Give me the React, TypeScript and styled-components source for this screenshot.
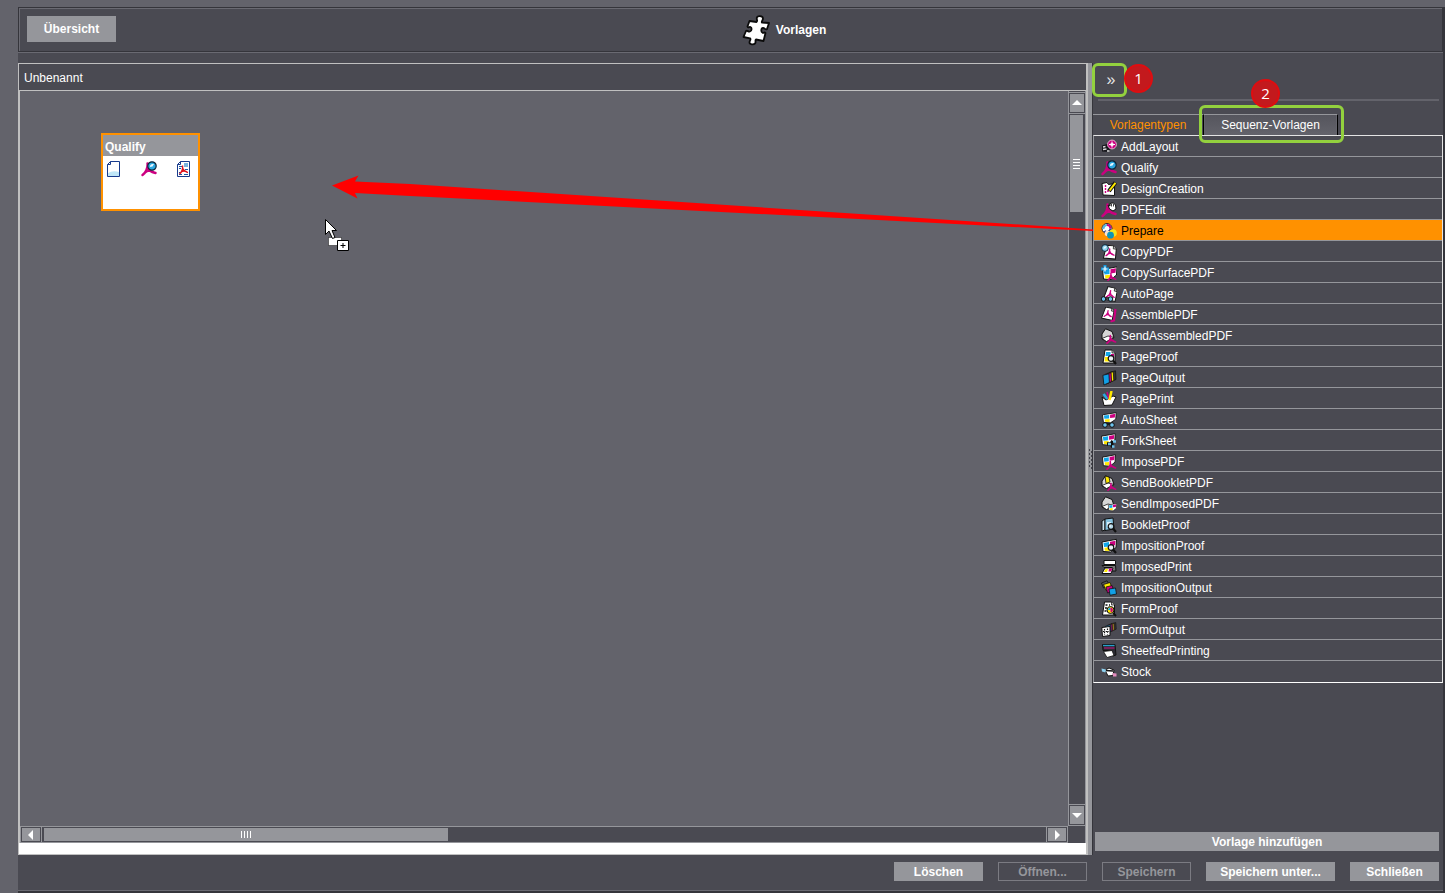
import React from 'react';
import styled, { createGlobalStyle, css } from 'styled-components';

const c = {
  page: '#63636b',
  panel: '#4a4a52',
  grey: '#95969b',
  light: '#c0c0c0',
  dark: '#35353b',
  orange: '#ff9100',
  green: '#93d13e',
  magenta: '#cc0080',
  cyan: '#12a8ea',
  yellow: '#ffe800',
};

const GlobalStyle = createGlobalStyle`
  * { box-sizing: border-box; }
  body {
    margin: 0;
    background: ${c.page};
    font-family: 'Liberation Sans', Arial, sans-serif;
    font-size: 12px;
    line-height: 16px;
    color: #fff;
  }
  button { font: inherit; color: inherit; border: 0; margin: 0; padding: 0; background: none; }
  svg { display: block; }
`;

const Page = styled.div`
  position: relative;
  min-height: 100vh;
  padding: 7px 0 0 18px;
  display: flex;
`;

const Window = styled.div`
  flex: 1;
  min-width: 0;
  display: flex;
  flex-direction: column;
  background: ${c.panel};
  border-right: 2px solid ${c.dark};
  border-bottom: 2px solid ${c.dark};
`;

const Header = styled.header`
  display: flex;
  align-items: center;
  height: 45px;
  padding: 0 0 2px 8px;
  border: 1px solid ${c.dark};
  box-shadow: inset 1px 1px 0 #6a6a72, 0 1px 0 #6a6a72;
`;

const Title = styled.h1`
  flex: 1;
  display: flex;
  align-items: center;
  justify-content: center;
  gap: 6px;
  margin: 0 0 0 10px;
  padding-top: 3px;
  font-size: 12px;
  font-weight: bold;
`;

const Button = styled.button<{ $w?: number; $tall?: boolean }>`
  width: ${p => (p.$w ? `${p.$w}px` : '100%')};
  height: ${p => (p.$tall ? 26 : 19)}px;
  background: ${c.grey};
  font-weight: bold;
  &:disabled {
    background: transparent;
    border: 1px solid #7b7b82;
    color: ${c.grey};
  }
`;

const Main = styled.main`
  flex: 1;
  display: flex;
  margin-top: 11px;
`;

const Editor = styled.section`
  flex: 1;
  min-width: 0;
  display: flex;
  flex-direction: column;
  border: 1px solid ${c.light};
  border-right-width: 2px;
`;

const EditorTitle = styled.h2`
  margin: 0;
  height: 27px;
  padding: 6px 5px 0;
  font-size: 12px;
  font-weight: normal;
  border-bottom: 1px solid ${c.light};
`;

const Workspace = styled.div`
  flex: 1;
  display: grid;
  grid-template-columns: 1fr 17px;
  grid-template-rows: 1fr 17px;
  border-left: 1px solid ${c.light};
  border-right: 1px solid ${c.grey};
`;

const Canvas = styled.div`
  position: relative;
  background: ${c.page};
`;

const WhiteStrip = styled.div`
  height: 11px;
  background: #fff;
`;

const ScrollBar = styled.div<{ $vertical?: boolean }>`
  display: flex;
  flex-direction: ${p => (p.$vertical ? 'column' : 'row')};
  ${p =>
    p.$vertical
      ? css`border-left: 1px solid ${c.grey}; padding-top: 1px;`
      : css`border-top: 1px solid ${c.grey}; border-bottom: 1px solid ${c.grey};`}
`;

const ScrollArrow = styled.button<{ $vertical?: boolean }>`
  flex: none;
  display: flex;
  align-items: center;
  justify-content: center;
  width: ${p => (p.$vertical ? 16 : 22)}px;
  height: ${p => (p.$vertical ? 22 : 15)}px;
  background: ${c.grey};
  border: solid ${c.grey};
  border-width: ${p => (p.$vertical ? '1px 0' : '0 1px')};
  box-shadow: inset 0 0 0 1px ${c.panel};
`;

const Track = styled.div<{ $vertical?: boolean }>`
  flex: 1;
  padding: ${p => (p.$vertical ? '1px' : '1px 2px')};
`;

const Thumb = styled.div<{ $vertical?: boolean }>`
  display: flex;
  flex-direction: ${p => (p.$vertical ? 'column' : 'row')};
  align-items: center;
  justify-content: center;
  gap: 2px;
  background: ${c.grey};
  ${p => (p.$vertical ? css`width: 13px; height: 97px;` : css`width: 404px; height: 13px;`)}
`;

const Grip = styled.i<{ $vertical?: boolean }>`
  background: #fff;
  ${p => (p.$vertical ? css`width: 7px; height: 1px;` : css`width: 1px; height: 7px;`)}
`;

const Splitter = styled.div`
  width: 5px;
  display: flex;
  align-items: center;
  background: ${c.grey};
  border-right: 1px solid ${c.dark};
`;

const Side = styled.aside`
  width: 350px;
  display: flex;
  flex-direction: column;
`;

const SideTop = styled.div`
  height: 38px;
  margin: 0 4px 13px 5px;
  border-bottom: 2px solid ${c.page};
`;

const Frame = styled.span<{ $inset: string }>`
  position: absolute;
  inset: ${p => p.$inset};
  border: 3px solid ${c.green};
  border-radius: 6px;
  pointer-events: none;
`;

const Badge = styled.span<{ $top: number; $left: number }>`
  position: absolute;
  top: ${p => p.$top}px;
  left: ${p => p.$left}px;
  width: 29px;
  height: 29px;
  border: 2px solid #df0d10;
  border-radius: 50%;
  background: #c3191d;
  color: #fff;
  font: 15px/24px 'Open Sans', sans-serif;
  text-align: center;
`;

const Collapse = styled.button`
  position: relative;
  width: 26px;
  height: 34px;
  font-size: 16px;
  color: #e6e6e6;
`;

const Tabs = styled.div`
  display: flex;
  height: 21px;
`;

const Tab = styled.button<{ $on?: boolean }>`
  position: relative;
  width: ${p => (p.$on ? 135 : 110)}px;
  border-top: 1px solid ${c.grey};
  ${p =>
    p.$on
      ? css`
          background: linear-gradient(#55555d, ${c.page});
          border-left: 1px solid #000;
          border-right: 1px solid #000;
          box-shadow: inset 1px 0 0 ${c.page}, inset -1px 0 0 ${c.page};
        `
      : css`
          color: ${c.orange};
        `}
`;

const List = styled.ul`
  list-style: none;
  margin: 0;
  padding: 0;
  border: 1px solid #e4e4e4;
  border-left-color: ${c.grey};
  border-bottom-color: #fff;
`;

const Row = styled.button<{ $on?: boolean }>`
  display: flex;
  align-items: center;
  gap: 4px;
  width: 100%;
  height: 21px;
  padding: 1px 7px 0;
  border-bottom: 1px solid ${c.grey};
  text-align: left;
  ${p => p.$on && css`background: ${c.orange}; color: #000;`}
  li:last-child > & { border-bottom: 0; padding-top: 0; }
`;

const SideFoot = styled.div`
  margin-top: auto;
  padding: 0 4px 4px 2px;
`;

const Footer = styled.footer`
  display: flex;
  justify-content: flex-end;
  gap: 15px;
  padding: 7px 4px 9px;
  border-bottom: 1px solid #6a6a72;
`;

const Node = styled.article`
  position: absolute;
  left: 81px;
  top: 42px;
  width: 99px;
  height: 78px;
  border: 2px solid ${c.orange};
  background: #fff;
`;

const NodeTitle = styled.h3`
  margin: 0;
  height: 21px;
  padding: 4px 2px 0;
  background: ${c.grey};
  font-size: 12px;
`;

const NodeIcons = styled.div`
  display: flex;
  justify-content: space-between;
  padding: 5px 8px 0 4px;
`;

const Cursor = styled.svg`
  position: absolute;
  left: 305px;
  top: 128px;
`;

const Arrow = styled.svg`
  position: absolute;
  left: 332px;
  top: 175px;
  width: calc(100% - 684px);
  height: 57px;
  pointer-events: none;
`;

/* ---- pieces of the 16px icons ---- */
const Acro = ({ t = '' }: { t?: string }) => (
  <g transform={t}>
    <path d="M1.5 14C4.500 12 7 7 6.500 2.500M7 6C7.500 9 10 11 14.500 12M3.500 12C6 9.500 10 9 13 11.500" fill="none" stroke={c.magenta} strokeWidth="2.4" strokeLinecap="round" />
  </g>
);
const Paper = ({ t = '', f = '#fff' }: { t?: string; f?: string }) => (
  <g transform={t}>
    <path d="M3.5 1H10.500L13.500 4V14H1.500Z" fill={f} stroke="#111" />
    <path d="M10.500 1V4H13.500" fill="#bbb" stroke="#111" strokeWidth=".7" />
  </g>
);
const PdfPage = ({ t = '' }: { t?: string }) => (
  <g transform={t}>
    <Paper />
    <Acro t="translate(3 3) scale(.6)" />
  </g>
);
const Sheet = ({ t = '' }: { t?: string }) => (
  <g transform={t}>
    <path d="M.5 3.500L15 .8L14.500 9L9 13.500L1.500 13Z" fill="#fff" stroke="#111" />
    <path d="M2 4.500L7.500 3.600V8L2.500 8.500Z" fill={c.cyan} />
    <path d="M8.500 3.300L14 2.200L13.500 6.800L8.500 7.500Z" fill={c.magenta} />
    <path d="M3 9.300L8 8.800V12.600L3.300 12.200Z" fill={c.yellow} />
  </g>
);
const Lens = ({ t = '', f = '#2aa7e0' }: { t?: string; f?: string }) => (
  <g transform={t}>
    <circle cx="5" cy="5" r="4.2" fill={f} stroke="#0c2436" strokeWidth="1.2" />
    <path d="M3 6C2.800 3.500 4.500 2.500 7 3L5.500 5.500Z" fill="#e8f8ff" />
  </g>
);
const Loupe = () => (
  <g>
    <circle cx="10" cy="9.5" r="2.8" fill="#d8e8ee" fillOpacity=".6" stroke="#111" strokeWidth="1.2" />
    <path d="M12 11.5L15 15" stroke="#111" strokeWidth="2.2" />
  </g>
);
const Wheels = () => (
  <g fill="#6fc4ee" stroke="#111">
    <path d="M4 12H13" strokeWidth="1.6" />
    <circle cx="4" cy="13" r="2.3" />
    <circle cx="11" cy="13" r="2.3" />
  </g>
);
const Envelope = () => (
  <g stroke="#111">
    <path d="M1 6L4.500 .8L11 3.500L13 9.500L5.500 13.500L1 11Z" fill="#d6d6d6" />
    <path d="M1 10.500L7 8L13 9.500L5.500 13.500Z" fill="#fff" strokeWidth=".8" />
  </g>
);
const Stack = ({ colors, t = '' }: { colors: string[]; t?: string }) => (
  <g transform={t}>
    {colors.map((f, i) => (
      <path key={i} d="M7.500 2.300L13.500 .8L14 9.500L8.500 12Z" transform={`translate(${-i * 2.2} ${i})`} fill={f} stroke="#111" strokeWidth=".8" />
    ))}
  </g>
);

const art: Record<string, React.ReactNode> = {
  AddLayout: (
    <>
      <path d="M1 6.500L8 4.500L10 9L8 13L1 12.500Z" fill="#15151a" />
      <path d="M2 8L4.500 7.500M2 10.500L5.500 10M6 12H8.500" stroke="#ddd" strokeWidth="1.3" />
      <circle cx="11" cy="5.5" r="4.4" fill={c.magenta} stroke="#e6b3d0" strokeWidth="1" />
      <circle cx="11" cy="5.5" r="1.8" fill="#f9d3ea" />
      <path d="M11 2.500V8.500M8 5.5H14" stroke="#fff" strokeWidth="1" />
    </>
  ),
  Qualify: (<><Acro /><Lens t="translate(6 0)" /></>),
  DesignCreation: (
    <>
      <path d="M1 2.500L6 1.500L7.500 3.500L13.500 2.500V14.500L2 14Z" fill="#fff" stroke="#111" />
      <path d="M4.500 4V12M6 10H10" stroke={c.magenta} strokeWidth="1.4" strokeDasharray="2 1" />
      <path d="M8 10L14.500 1.500" stroke="#111" strokeWidth="4" />
      <path d="M8.5 9.5L14.500 1.800" stroke={c.yellow} strokeWidth="2" />
    </>
  ),
  PDFEdit: (
    <>
      <Acro />
      <path d="M7 3L9 4V1.5L11 1L12.500 1L14.500 3L15 7L12 9L8.5 7Z" fill="#fff" stroke="#111" />
      <path d="M10.500 2V4.500M12.500 2V4.500" stroke="#111" strokeWidth=".8" />
    </>
  ),
  Prepare: (
    <>
      <circle cx="6" cy="5.500" r="5" fill="#fff" stroke="#2a2230" strokeWidth="1" />
      <path d="M6 2A3.5 3.5 0 0 1 9.5 5.500" fill="none" stroke={c.magenta} strokeWidth="2.2" />
      <path d="M9.5 5.500A3.5 3.5 0 0 1 3.500 8" fill="none" stroke="#273a96" strokeWidth="2.2" />
      <path d="M2.500 6A3.5 3.5 0 0 1 6 2" fill="none" stroke="#55b6dd" strokeWidth="2.2" />
      <circle cx="6.500" cy="10.500" r="2.800" fill="#f6e3d2" />
      <circle cx="12" cy="10" r="3.8" fill="#f5e21c" />
      <circle cx="9.5" cy="12.200" r="3.4" fill="#0d94b8" />
    </>
  ),
  CopyPDF: (<><PdfPage t="rotate(5 8 8) translate(1.5 .5)" /><Lens t="scale(.8)" f="#8ad0ee" /></>),
  CopySurfacePDF: (
    <>
      <Sheet t="translate(1 1)" />
      <path d="M4 0V8M0 4H8" stroke="#1397dc" strokeWidth="3" />
      <path d="M4 1.500V6.500M1.500 4H6.500" stroke="#fff" strokeWidth="1.2" />
      <Acro t="translate(6 7) scale(.6)" />
    </>
  ),
  AutoPage: (<><PdfPage t="rotate(12 8 8) translate(2 0)" /><g transform="translate(-1.5 0)"><Wheels /></g></>),
  AssemblePDF: (<><PdfPage t="rotate(12 8 8) scale(.9)" /><path d="M14.5 2L13 13.500L9.500 14.500" stroke={c.magenta} strokeWidth="2.2" fill="none" /></>),
  SendAssembledPDF: (<><Envelope /><Acro t="translate(5 6) scale(.66)" /></>),
  PageProof: (<><Paper t="translate(.5 0)" /><path d="M5 3H9.500V7H4.500Z" fill={c.cyan} /><path d="M4 8H8V12.500H3.500Z" fill={c.yellow} /><path d="M10 5H13V7.500H10Z" fill={c.magenta} /><Loupe /></>),
  PageOutput: <Stack colors={['#333', c.yellow, c.magenta, '#12a0e6']} t="translate(1 0)" />,
  PagePrint: (
    <>
      <path d="M1 6L5 9L12 5L15 6L11 14L3 14.5Z" fill="#fff" stroke="#111" />
      <path d="M2.500 3L6.500 8" stroke="#29a9e2" strokeWidth="2.5" />
      <path d="M6 1L8 8" stroke={c.magenta} strokeWidth="1.5" />
      <path d="M10.500 0L8.5 9" stroke={c.yellow} strokeWidth="2.5" />
    </>
  ),
  AutoSheet: (<><Sheet t="translate(1 0) scale(.95 .8)" /><Wheels /></>),
  ForkSheet: (<><Sheet t="scale(.95 .9)" /><path d="M6 11H10L12 8M10 11L12 14" stroke="#111" strokeWidth="3.6" fill="none" /><path d="M7 11H10M12 8.500H15M11 13.500H13.500" stroke="#6fc4ee" strokeWidth="2.4" fill="none" /></>),
  ImposePDF: (<><Sheet t="translate(1 0) scale(.9)" /><Acro t="translate(5 6) scale(.66)" /></>),
  SendBookletPDF: (<><Envelope /><path d="M4 1L8 2L9 7L5 8.500Z" fill={c.yellow} stroke="#111" strokeWidth=".8" /><Acro t="translate(6 7) scale(.6)" /></>),
  SendImposedPDF: (<><Envelope /><Sheet t="translate(7 7) scale(.58)" /></>),
  BookletProof: (<><path d="M1 4L4 2V13L1 14Z" fill="#cfe7f2" stroke="#111" /><path d="M4 2L12 1L13 12L4 13.5Z" fill="#86c3e0" stroke="#111" /><path d="M6 5H10V10H6Z" fill="#d9f0fa" /><Loupe /></>),
  ImpositionProof: (<><Sheet t="translate(.5 .5)" /><Loupe /></>),
  ImposedPrint: (
    <>
      <path d="M3 1.5H14.500V5.500H3Z" fill="#fff" stroke="#111" />
      <path d="M1 6.500H14.500L15 12H11V8.500H3Z" fill="#777" stroke="#111" />
      <path d="M4 9H12L10 14.500H1Z" fill="#fff" stroke="#111" />
      <path d="M4.500 10H7L6 13H3Z" fill={c.yellow} /><path d="M8 9.5H11.500L10 12.500H7.500Z" fill={c.magenta} />
    </>
  ),
  ImpositionOutput: (
    <g stroke="#111" strokeWidth=".8">
      <path d="M.5 3L6 .8L8.500 5L2.500 8Z" fill="#555" />
      <path d="M2.500 4.500L9 2.500L11 8L5 10.500Z" fill={c.yellow} />
      <path d="M5 7L11 5.500L13 11L6.500 13Z" fill={c.magenta} />
      <path d="M8 9L14.500 8L15.500 14L9 15.300Z" fill="#12a0e6" />
    </g>
  ),
  FormProof: (<><Paper /><path d="M4.500 4H6.500M4 7H6M3.500 10H5.500M8 4H9" stroke="#111" strokeWidth="1.5" /><circle cx="9.5" cy="9" r="3.5" fill={c.yellow} stroke="#111" /><path d="M7 9A2.5 2.5 0 0 1 9.5 6.5V9Z" fill={c.cyan} /><path d="M9.5 6.5A2.5 2.5 0 0 1 9.5 11.5Z" fill={c.magenta} /><path d="M12 12L15 15" stroke="#111" strokeWidth="2" /></>),
  FormOutput: (<><Stack colors={['#333', '#a8802a', '#7c1c5c', '#1c7cac']} t="translate(4 0) scale(.8 .75)" /><path d="M.800 5.500L9 4.500V13.500L1.500 14.500Z" fill="#fff" stroke="#111" /><path d="M3.500 7V13M6.5 6.500V12.500M2 9.500H8" stroke="#111" strokeDasharray="1.5 1.2" strokeWidth="1.2" /></>),
  SheetfedPrinting: (
    <>
      <path d="M1.500 1.500H14L15 12L12 13L11 7.500H2Z" fill="#2a2a32" stroke="#111" />
      <path d="M2 2.5H13.500" stroke="#26a0cc" strokeWidth="1.3" /><path d="M3 5H13.500" stroke="#a81b73" strokeWidth="1.3" />
      <path d="M2.500 8.500L11 7.500L13 12.500L6 14.500Z" fill="#fff" stroke="#111" strokeWidth=".8" />
    </>
  ),
  Stock: (
    <>
      <path d="M4 6L8 4L13 6L12 11.500L7 12Z" fill="#fff" stroke="#111" />
      <path d="M5 6.5L12 7" stroke="#111" strokeWidth="1.4" />
      <path d="M.5 4.500L5 5.500L4.500 8.500L1 7.500Z" fill="#8ed0ee" />
      <path d="M11.500 9L15.500 9.5V12.500L12 12.500Z" fill="#e28bbd" />
    </>
  ),
};

const Icon = ({ name }: { name: string }) => (
  <svg width="16" height="16" viewBox="0 0 16 16" aria-hidden="true">{art[name]}</svg>
);

const BlankPage = () => (
  <svg width="13" height="16" viewBox="0 0 13 16" aria-hidden="true">
    <path d="M3.5 .5H12.5V15.5H.5V3.5Z" fill="#fff" stroke="#173a8c" />
    <path d="M1 12Q6 9 12 11V15H1Z" fill="#bfe6f7" />
    <path d="M.5 3.5H3.5V.5" fill="none" stroke="#173a8c" />
  </svg>
);

const PdfReport = () => (
  <svg width="13" height="16" viewBox="0 0 13 16" aria-hidden="true">
    <path d="M3.5 .5H12.5V15.5H.5V3.5Z" fill="#fff" stroke="#173a8c" />
    <path d="M.5 3.5H3.5V.5" fill="none" stroke="#173a8c" />
    <path d="M7 2H11V6H7Z" fill="#79b4de" />
    <path d="M2 5.5H5M2 7.5H4M8 8.5H11M2 11.5H3M2 13.5H5M7 13.5H11" stroke="#1c58a5" />
    <path d="M2.5 13C5 11 6 8 5.5 4.5M5.5 7C6.5 9 8 11 11 11.5M4 11Q7 9 10 11" fill="none" stroke="#e0101a" strokeWidth="1.4" />
  </svg>
);

const Puzzle = () => (
  <svg width="28" height="32" viewBox="0 0 28 32" aria-hidden="true">
    <path
      d="M7.500 7L14.500 8C16 7 14.500 6 14.800 4C15 1.500 21 1.500 21 4.500C21 6.500 19 7.500 20 8.500L27 9L25 15C23.500 16.500 23 14 21 14C19 14 18.700 18 20.500 18.800C22 19.300 22.500 17.500 23.500 19L21.500 27L14 25.500C12.500 26.500 14.500 28 13 29.500C11.500 31 7.500 30.500 7.500 28.500C7.500 26.500 9.500 25.500 8 24.300L1.500 23L4 17C5.500 16 6 18 8 17.500C10 17 10 13.500 8.500 13C7.500 12.500 6 14.500 5.500 12.500Z"
      fill="#fff" stroke="#0b0b0b" strokeWidth="1.8" strokeLinejoin="round"
    />
  </svg>
);

const Triangle = ({ d }: { d: string }) => (
  <svg width="10" height="10" viewBox="0 0 10 10" aria-hidden="true"><path d={d} fill="#fff" /></svg>
);

const templates = [
  'AddLayout', 'Qualify', 'DesignCreation', 'PDFEdit', 'Prepare', 'CopyPDF', 'CopySurfacePDF', 'AutoPage',
  'AssemblePDF', 'SendAssembledPDF', 'PageProof', 'PageOutput', 'PagePrint', 'AutoSheet', 'ForkSheet',
  'ImposePDF', 'SendBookletPDF', 'SendImposedPDF', 'BookletProof', 'ImpositionProof', 'ImposedPrint',
  'ImpositionOutput', 'FormProof', 'FormOutput', 'SheetfedPrinting', 'Stock',
];

const grips = [0, 1, 2, 3];

export default function App() {
  const [selected, setSelected] = React.useState('Prepare');
  return (
    <Page>
      <GlobalStyle />
      <Window>
        <Header>
          <Button $w={89} $tall>Übersicht</Button>
          <Title><Puzzle />Vorlagen</Title>
        </Header>
        <Main>
          <Editor>
            <EditorTitle>Unbenannt</EditorTitle>
            <Workspace>
              <Canvas>
                <Node>
                  <NodeTitle>Qualify</NodeTitle>
                  <NodeIcons><BlankPage /><Icon name="Qualify" /><PdfReport /></NodeIcons>
                </Node>
                <Cursor width="26" height="34" viewBox="0 0 26 34" aria-hidden="true">
                  <path d="M3.5 18.5H16.5V26.5H3.5Z" fill="#fff" stroke="#111" strokeDasharray="1 1" />
                  <path d="M.5 .5V15.5L4 12L7.5 19.5L10 18.5L7 11.5H11.5Z" fill="#fff" stroke="#000" />
                  <path d="M12.5 21.5H23.5V31.5H12.5Z" fill="#fff" stroke="#000" />
                  <path d="M18 24V29M15.5 26.5H20.5" stroke="#000" />
                </Cursor>
              </Canvas>
              <ScrollBar $vertical>
                <ScrollArrow $vertical aria-label="Nach oben"><Triangle d="M0 7L5 2L10 7Z" /></ScrollArrow>
                <Track $vertical>
                  <Thumb $vertical>{grips.map(g => <Grip key={g} $vertical />)}</Thumb>
                </Track>
                <ScrollArrow $vertical aria-label="Nach unten"><Triangle d="M0 3L5 8L10 3Z" /></ScrollArrow>
              </ScrollBar>
              <ScrollBar>
                <ScrollArrow aria-label="Nach links"><Triangle d="M7 0L2 5L7 10Z" /></ScrollArrow>
                <Track><Thumb>{grips.map(g => <Grip key={g} />)}</Thumb></Track>
                <ScrollArrow aria-label="Nach rechts"><Triangle d="M3 0L8 5L3 10Z" /></ScrollArrow>
              </ScrollBar>
            </Workspace>
            <WhiteStrip />
          </Editor>
          <Splitter>
            <svg width="4" height="20" viewBox="0 0 4 20" aria-hidden="true">
              <path d="M1.5 0V20" stroke="#44444c" strokeDasharray="2 2" />
              <path d="M3.5 2V20" stroke="#44444c" strokeDasharray="2 2" />
            </svg>
          </Splitter>
          <Side>
            <SideTop>
              <Collapse aria-label="Einklappen">
                »
                <Frame $inset="0 -3px 0 -6px" />
                <Badge $top={1} $left={26}>1</Badge>
              </Collapse>
            </SideTop>
            <Tabs role="tablist">
              <Tab role="tab" aria-selected={false}>Vorlagentypen</Tab>
              <Tab role="tab" aria-selected $on>
                Sequenz-Vorlagen
                <Frame $inset="-10px -7px -8px -5px" />
                <Badge $top={-36} $left={47}>2</Badge>
              </Tab>
            </Tabs>
            <List>
              {templates.map(name => (
                <li key={name}>
                  <Row $on={name === selected} onClick={() => setSelected(name)}>
                    <Icon name={name} />
                    {name}
                  </Row>
                </li>
              ))}
            </List>
            <SideFoot><Button>Vorlage hinzufügen</Button></SideFoot>
          </Side>
        </Main>
        <Footer>
          <Button $w={89}>Löschen</Button>
          <Button $w={89} disabled>Öffnen...</Button>
          <Button $w={89} disabled>Speichern</Button>
          <Button $w={129}>Speichern unter...</Button>
          <Button $w={89}>Schließen</Button>
        </Footer>
      </Window>
      <Arrow viewBox="0 0 761 57" preserveAspectRatio="none" aria-hidden="true">
        <path d="M0 10.5L26.5 .5L23 6.5L78 9L761 54.500V56L78 21L23 18L25.5 23.5Z" fill="#f00" />
      </Arrow>
    </Page>
  );
}
